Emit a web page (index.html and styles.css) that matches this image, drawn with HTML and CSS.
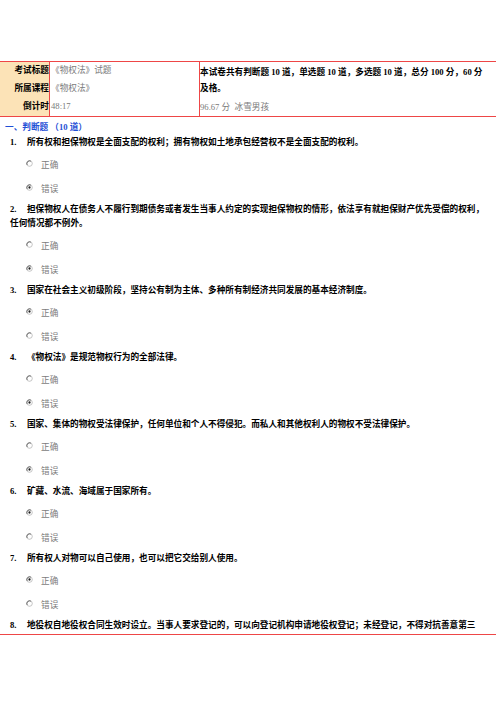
FILE: index.html
```html
<!DOCTYPE html>
<html lang="zh-CN">
<head>
<meta charset="utf-8">
<title>《物权法》试题</title>
<link rel="stylesheet" href="styles.css">
</head>
<body>
<div class="page">
  <div class="info">
    <div class="lab">考试标题</div>
    <div class="val">《物权法》试题</div>
    <div class="desc">本试卷共有判断题 10 道，单选题 10 道，多选题 10 道，总分 100 分，60 分<br>及格。</div>
    <div class="lab">所属课程</div>
    <div class="val">《物权法》</div>
    <div class="lab">倒计时</div>
    <div class="val">48:17</div>
    <div class="score">96.67 分&nbsp;&nbsp;冰雪男孩</div>
  </div>

  <div class="section">一、判断题 （10 道）</div>

  <div class="q">
    <p class="qt">所有权和担保物权是全面支配的权利；拥有物权如土地承包经营权不是全面支配的权利。</p>
    <div class="opt"><svg class="radio" viewBox="0 0 8 8"><circle class="ring" cx="4" cy="4" r="3.2"/><path class="shade" d="M1.3 5.6 A3.2 3.2 0 0 1 5.6 1.3"/></svg><span>正确</span></div>
    <div class="opt"><svg class="radio" viewBox="0 0 8 8"><circle class="ring" cx="4" cy="4" r="3.2"/><path class="shade" d="M1.3 5.6 A3.2 3.2 0 0 1 5.6 1.3"/><circle class="dot" cx="4" cy="4" r="1.3"/></svg><span>错误</span></div>
  </div>

  <div class="q">
    <p class="qt">担保物权人在债务人不履行到期债务或者发生当事人约定的实现担保物权的情形，依法享有就担保财产优先受偿的权利，任何情况都不例外。</p>
    <div class="opt"><svg class="radio" viewBox="0 0 8 8"><circle class="ring" cx="4" cy="4" r="3.2"/><path class="shade" d="M1.3 5.6 A3.2 3.2 0 0 1 5.6 1.3"/></svg><span>正确</span></div>
    <div class="opt"><svg class="radio" viewBox="0 0 8 8"><circle class="ring" cx="4" cy="4" r="3.2"/><path class="shade" d="M1.3 5.6 A3.2 3.2 0 0 1 5.6 1.3"/><circle class="dot" cx="4" cy="4" r="1.3"/></svg><span>错误</span></div>
  </div>

  <div class="q">
    <p class="qt">国家在社会主义初级阶段，坚持公有制为主体、多种所有制经济共同发展的基本经济制度。</p>
    <div class="opt"><svg class="radio" viewBox="0 0 8 8"><circle class="ring" cx="4" cy="4" r="3.2"/><path class="shade" d="M1.3 5.6 A3.2 3.2 0 0 1 5.6 1.3"/><circle class="dot" cx="4" cy="4" r="1.3"/></svg><span>正确</span></div>
    <div class="opt"><svg class="radio" viewBox="0 0 8 8"><circle class="ring" cx="4" cy="4" r="3.2"/><path class="shade" d="M1.3 5.6 A3.2 3.2 0 0 1 5.6 1.3"/></svg><span>错误</span></div>
  </div>

  <div class="q">
    <p class="qt">《物权法》是规范物权行为的全部法律。</p>
    <div class="opt"><svg class="radio" viewBox="0 0 8 8"><circle class="ring" cx="4" cy="4" r="3.2"/><path class="shade" d="M1.3 5.6 A3.2 3.2 0 0 1 5.6 1.3"/></svg><span>正确</span></div>
    <div class="opt"><svg class="radio" viewBox="0 0 8 8"><circle class="ring" cx="4" cy="4" r="3.2"/><path class="shade" d="M1.3 5.6 A3.2 3.2 0 0 1 5.6 1.3"/><circle class="dot" cx="4" cy="4" r="1.3"/></svg><span>错误</span></div>
  </div>

  <div class="q">
    <p class="qt">国家、集体的物权受法律保护，任何单位和个人不得侵犯。而私人和其他权利人的物权不受法律保护。</p>
    <div class="opt"><svg class="radio" viewBox="0 0 8 8"><circle class="ring" cx="4" cy="4" r="3.2"/><path class="shade" d="M1.3 5.6 A3.2 3.2 0 0 1 5.6 1.3"/></svg><span>正确</span></div>
    <div class="opt"><svg class="radio" viewBox="0 0 8 8"><circle class="ring" cx="4" cy="4" r="3.2"/><path class="shade" d="M1.3 5.6 A3.2 3.2 0 0 1 5.6 1.3"/><circle class="dot" cx="4" cy="4" r="1.3"/></svg><span>错误</span></div>
  </div>

  <div class="q">
    <p class="qt">矿藏、水流、海域属于国家所有。</p>
    <div class="opt"><svg class="radio" viewBox="0 0 8 8"><circle class="ring" cx="4" cy="4" r="3.2"/><path class="shade" d="M1.3 5.6 A3.2 3.2 0 0 1 5.6 1.3"/><circle class="dot" cx="4" cy="4" r="1.3"/></svg><span>正确</span></div>
    <div class="opt"><svg class="radio" viewBox="0 0 8 8"><circle class="ring" cx="4" cy="4" r="3.2"/><path class="shade" d="M1.3 5.6 A3.2 3.2 0 0 1 5.6 1.3"/></svg><span>错误</span></div>
  </div>

  <div class="q">
    <p class="qt">所有权人对物可以自己使用，也可以把它交给别人使用。</p>
    <div class="opt"><svg class="radio" viewBox="0 0 8 8"><circle class="ring" cx="4" cy="4" r="3.2"/><path class="shade" d="M1.3 5.6 A3.2 3.2 0 0 1 5.6 1.3"/><circle class="dot" cx="4" cy="4" r="1.3"/></svg><span>正确</span></div>
    <div class="opt"><svg class="radio" viewBox="0 0 8 8"><circle class="ring" cx="4" cy="4" r="3.2"/><path class="shade" d="M1.3 5.6 A3.2 3.2 0 0 1 5.6 1.3"/></svg><span>错误</span></div>
  </div>

  <div class="q">
    <p class="qt">地役权自地役权合同生效时设立。当事人要求登记的，可以向登记机构申请地役权登记；未经登记，不得对抗善意第三</p>
  </div>
</div>
</body>
</html>
```

FILE: styles.css
```css
html, body {
  margin: 0;
  padding: 0;
  background: #fff;
}

body {
  font-family: "Liberation Serif", "Noto Sans CJK SC", serif;
  font-size: 8.65px;
  color: #000;
  overflow-x: hidden;
}

.page {
  box-sizing: border-box;
  height: 635px;
  padding-top: 61px;
  overflow: hidden;
  border-bottom: 1px solid #ee4646;
  counter-reset: q;
}

.info {
  display: grid;
  grid-template-columns: 50px 150px 1fr;
  grid-template-rows: 18px 18px 18px;
  border-top: 1px solid #ee4646;
  border-bottom: 1px solid #ee4646;
}

.lab {
  box-sizing: border-box;
  background: #fce3b7;
  border-right: 1px solid #ee4646;
  text-align: right;
  font-weight: bold;
  line-height: 16px;
  white-space: nowrap;
}

.val {
  box-sizing: border-box;
  border-right: 1px solid #ee4646;
  color: #7a7a7a;
  line-height: 16px;
  padding-left: 1px;
  white-space: nowrap;
}

.desc {
  grid-column: 3;
  grid-row: 1 / span 2;
  align-self: center;
  font-weight: bold;
  line-height: 16px;
  white-space: nowrap;
}

.score {
  color: #7a7a7a;
  line-height: 18px;
  white-space: nowrap;
}

.section {
  margin-top: 3px;
  padding-left: 5px;
  line-height: 14px;
  color: #1f4fd6;
  font-weight: bold;
}

.q {
  padding: 1px 6px 0 10px;
  counter-increment: q;
}

.qt {
  margin: 0 0 4px;
  line-height: 14px;
  font-weight: bold;
}

.qt::before {
  content: counter(q) ".";
  margin-right: 10.5px;
}

.opt {
  height: 24px;
  line-height: 24px;
  padding-left: 16px;
  color: #7c7c7c;
  white-space: nowrap;
}

.radio {
  width: 7px;
  height: 7px;
  margin-right: 8px;
  vertical-align: 1px;
}

.ring {
  fill: #fff;
  stroke: #b4b4b4;
  stroke-width: 0.9;
}

.shade {
  fill: none;
  stroke: #585858;
  stroke-width: 1;
}

.dot {
  fill: #1e1e1e;
}
```
